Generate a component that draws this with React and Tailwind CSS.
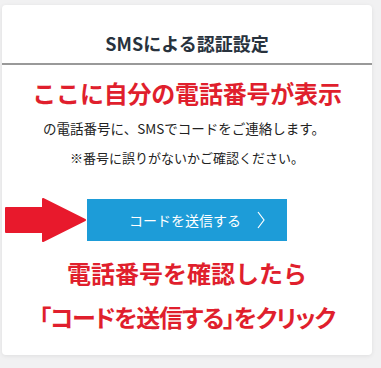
export default function App() {
  const jp = { fontFamily: '"Noto Sans CJK JP", "Noto Sans", sans-serif' };
  return (
    <div className="w-[381px] h-[368px] bg-[#f1f1f2] pt-[5px] pl-[2px]" style={jp}>
      <div className="relative w-[370px] h-[350px] bg-white rounded-[4px] shadow-[0_1px_4px_rgba(0,0,0,0.08)] flex flex-col items-center">
        <div className="w-full h-[60px] border-b-2 border-[#999999] pt-[26px] text-center">
          <h1 className="text-[18px] leading-[24px] font-bold text-[#28323d]">SMSによる認証設定</h1>
        </div>
        <p className="mt-[12px] text-[24px] leading-[32px] font-bold text-[#e01f2d] tracking-[-0.2px]">ここに自分の電話番号が表示</p>
        <p className="mt-[9px] text-[13.5px] leading-[20px] text-[#222222] pr-[6px]">の電話番号に、SMSでコードをご連絡します。</p>
        <p className="mt-[10px] text-[13px] leading-[20px] text-[#222222]">※番号に誤りがないかご確認ください。</p>
        <button className="mt-[31px] w-[200px] h-[42px] bg-[#1d9cd8] text-white text-[14px] flex items-center justify-center gap-[16px] pl-[20px]">
          <span>コードを送信する</span>
          <svg width="8" height="18" viewBox="0 0 8 18" fill="none">
            <polyline points="1,1 7,9 1,17" stroke="white" strokeWidth="1.2" />
          </svg>
        </button>
        <svg className="absolute left-[2px] top-[192px]" width="84" height="46" viewBox="0 0 84 46">
          <polygon points="2,11 39,11 39,2 81,23 39,44 39,35 2,35" fill="#e8192c" stroke="#e8192c" strokeWidth="2" strokeLinejoin="round" />
        </svg>
        <p className="mt-[16px] text-[24px] leading-[32px] font-bold text-[#e01f2d]">電話番号を確認したら</p>
        <p className="mt-[12px] text-[24px] leading-[32px] font-bold text-[#e01f2d] [font-feature-settings:'palt'] tracking-[-1.2px]">「コードを送信する」をクリック</p>
      </div>
    </div>
  );
}
